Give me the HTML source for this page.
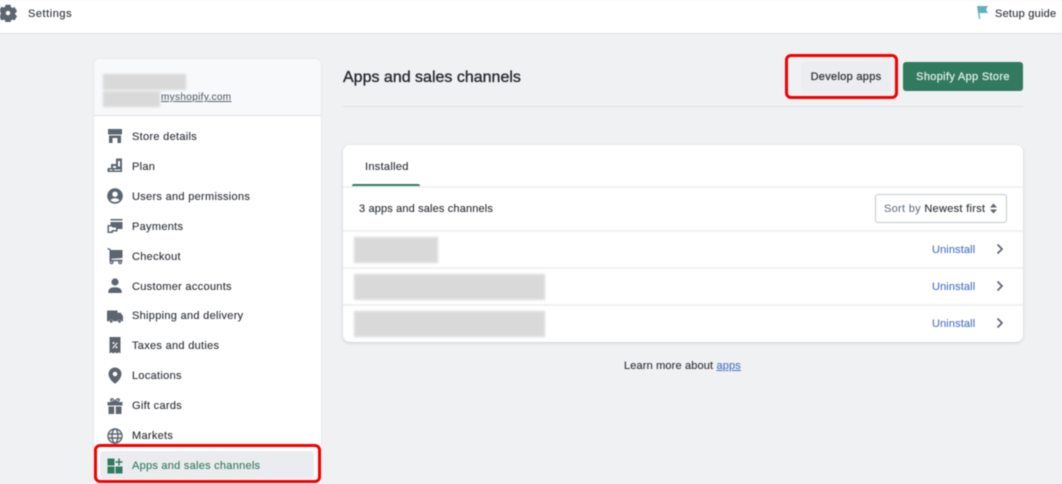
<!DOCTYPE html>
<html><head><meta charset="utf-8"><style>
html,body{margin:0;padding:0}
body{width:1062px;height:484px;overflow:hidden;background:#f0f1f3;font-family:"Liberation Sans",sans-serif;color:#2c3036;font-size:11px;letter-spacing:.3px;-webkit-text-stroke:.12px currentColor}
#w{position:relative;width:1062px;height:484px;overflow:hidden;filter:blur(.4px)}
.a{position:absolute;white-space:nowrap}
.t{position:absolute;left:132px;white-space:nowrap;line-height:14px}
.i{position:absolute;left:106px;width:18px;height:18px}
.g{fill:#5c6570}
.bl{position:absolute;background:#d9d9d9;filter:blur(1px)}
.ln{position:absolute;background:#f0f1f2;height:2px}
.u{position:absolute;left:932px;color:#4d72c4;line-height:14px;letter-spacing:.12px}
.c{position:absolute;left:995px;width:10px;height:12px}
.m{letter-spacing:.15px}
</style></head><body><div id="w">
<div class="a" style="left:0;top:0;width:1062px;height:33px;background:#fff;border-bottom:1px solid #dfe1e4"></div>
<svg class="a" style="left:-1px;top:4px;width:18px;height:18px" viewBox="0 0 18 18"><path class="g" fill-rule="evenodd" d="M6.500 .8h5l.5 2.400 1.300.7 2.300-.8 2.500 4.200-1.800 1.700-.1.000.1 1.600 1.800 1.600-2.500 4.200-2.300-.8-1.300.7-.5 2.400h-5l-.5-2.400-1.300-.7-2.300.8L-.1 12.200l1.800-1.600V8.600L-.1 6.900 2.400 2.700l2.300.8 1.300-.7zM9 6.900a2.200 2.200 0 1 0 0 4.400 2.200 2.200 0 0 0 0-4.400z"/></svg>
<div class="a" style="left:28px;top:7px;line-height:14px;letter-spacing:.55px">Settings</div>
<svg class="a" style="left:976px;top:5px;width:13px;height:15px" viewBox="0 0 13 15"><path fill="#5fb0c0" d="M1 1h11l-2 3.500L12 8H3.500l.8 6H3z"/></svg>
<div class="a" style="left:995px;top:7px;line-height:14px;letter-spacing:.24px">Setup guide</div>

<div class="a" style="left:94px;top:59px;width:227px;height:440px;background:#fff;border-radius:6px;box-shadow:0 0 2px rgba(60,70,80,.12)"></div>
<div class="a" style="left:94px;top:59px;width:227px;height:56px;background:#f8f9fa;border-radius:6px 6px 0 0;border-bottom:1px solid #dfe1e4"></div>
<div class="a" style="left:161px;top:91px;font-size:10px;line-height:14px;color:#5c6570;text-decoration:underline;letter-spacing:.35px">myshopify.com</div>
<div class="bl" style="left:103px;top:74px;width:83px;height:16px"></div>
<div class="bl" style="left:103px;top:91px;width:57px;height:16px"></div>

<svg class="i" style="top:127px" viewBox="0 0 18 18"><path class="g" d="M2 2h14v5.500H2zM3 8.500h12V16h-3.500v-5h-5v5H3z"/></svg>
<div class="t" style="top:130px">Store details</div>
<svg class="i" style="top:157px" viewBox="0 0 18 18"><path class="g" fill-rule="evenodd" d="M10 1.500h6V15H1.500v-4H5V7h5zM7 9v2h3V9zM3.500 12.500v1h3v-1zM8 12.500v1h6.500v-1zM12 4v5.500h2V4z"/></svg>
<div class="t" style="top:160px">Plan</div>
<svg class="i" style="top:187px" viewBox="0 0 18 18"><path class="g" fill-rule="evenodd" d="M9 1.200a7.800 7.800 0 1 1 0 15.600A7.800 7.800 0 0 1 9 1.200zM9 4.500a2.700 2.700 0 1 0 0 5.400 2.700 2.700 0 0 0 0-5.400zM4.500 13.300c1 1 2.800 1.700 4.500 1.700s3.500-.7 4.500-1.700c-.8-1.400-2.600-2.100-4.500-2.100s-3.700.7-4.500 2.100z"/></svg>
<div class="t" style="top:190px">Users and permissions</div>
<svg class="i" style="top:217px" viewBox="0 0 18 18"><path class="g" fill-rule="evenodd" d="M4.500 2h12v1.500h-12zM4.500 5h12v7h-5v2.500H7V16H1.500V8h3zM3 9.500v5h2.500V13H10v-2.500H6V9.500z"/></svg>
<div class="t" style="top:220px">Payments</div>
<svg class="i" style="top:247px" viewBox="0 0 18 18"><path class="g" d="M1.500 1l2.800.8.600 1.200h11.600v8l-11 .8v1h11v1.400H3.500V3L1.500 2.300z"/><path fill="none" stroke="#5c6570" stroke-width="1.300" d="M4.300 15.300a1.300 1.300 0 1 0 2.600 0 1.300 1.300 0 1 0-2.600 0zM12.800 15.300a1.300 1.300 0 1 0 2.600 0 1.300 1.300 0 1 0-2.600 0z"/></svg>
<div class="t" style="top:250px">Checkout</div>
<svg class="i" style="top:277px" viewBox="0 0 18 18"><circle class="g" cx="9" cy="5" r="3.600"/><path class="g" d="M2.300 16v-1.500c0-2.600 2.800-4.300 6.700-4.300s6.700 1.700 6.700 4.300V16z"/></svg>
<div class="t" style="top:280px">Customer accounts</div>
<svg class="i" style="top:307px" viewBox="0 0 18 18"><path class="g" d="M1 4.500a1 1 0 0 1 1-1h9.500v2.200h3.200L17 9.300v4.900h-1.400a2.200 2.200 0 0 0-4.200 0H7.300a2.200 2.200 0 0 0-4.200 0H1z"/><circle class="g" cx="5.200" cy="14.300" r="1.500"/><circle class="g" cx="13.500" cy="14.300" r="1.500"/></svg>
<div class="t" style="top:309px">Shipping and delivery</div>
<svg class="i" style="top:337px" viewBox="0 0 18 18"><path class="g" fill-rule="evenodd" d="M3.500 0h11v16.500l-1.800-1.200-1.900 1.200-1.800-1.200-1.800 1.200-1.900-1.200-1.800 1.200zM6.500 6a1 1 0 1 0 2 0 1 1 0 0 0-2 0zM9.500 10.300a1 1 0 1 0 2 0 1 1 0 0 0-2 0zM6.300 10.800l.8.700 4.600-5.400-.8-.7z"/></svg>
<div class="t" style="top:339px">Taxes and duties</div>
<svg class="i" style="top:366.500px" viewBox="0 0 18 18"><path class="g" fill-rule="evenodd" d="M9 .5a6.500 6.500 0 0 1 6.500 6.500c0 3.800-3.600 7.800-6.500 9.700-2.900-1.900-6.500-5.900-6.500-9.700A6.500 6.500 0 0 1 9 .5zM9 4.700a2.300 2.300 0 1 0 0 4.600 2.300 2.300 0 0 0 0-4.600z"/></svg>
<div class="t" style="top:369px">Locations</div>
<svg class="i" style="top:396.500px" viewBox="0 0 18 18"><path class="g" fill-rule="evenodd" d="M1.500 5h15v3.500h-15zM2.500 9.500h5.700V17H2.500zM9.800 9.500h5.700V17H9.800z"/><path d="M9 5C8 2.500 6.500 1.500 5.300 2S4.300 4.500 9 5c4.700-.5 4.900-2.500 3.700-3S10 2.500 9 5z" fill="none" stroke="#5c6570" stroke-width="1.400"/></svg>
<div class="t" style="top:399px">Gift cards</div>
<svg class="i" style="top:426.500px" viewBox="0 0 18 18" fill="none" stroke="#5c6570" stroke-width="1.400"><circle cx="9" cy="9" r="7"/><ellipse cx="9" cy="9" rx="3" ry="7"/><path d="M2 7h14M2 11h14"/></svg>
<div class="t" style="top:429px">Markets</div>

<div class="a" style="left:100px;top:451px;width:214px;height:28px;background:#ebecef;border-radius:4px"></div>
<svg class="i" style="top:456.500px" viewBox="0 0 18 18"><path fill="#317a5f" d="M1.500 1.500h7v7h-7zM1.500 9.500h7v7h-7zM9.500 9.500h7v7h-7zM12.300 1.500h1.500v2.700h2.700v1.500h-2.700v2.800h-1.500V5.700H9.500V4.200h2.800z"/></svg>
<div class="t" style="top:459px;color:#317a5f;letter-spacing:.26px">Apps and sales channels</div>
<div class="a" style="left:94px;top:444px;width:227px;height:39px;box-sizing:border-box;border:3px solid #f40000;border-radius:6px"></div>

<div class="a" style="left:343px;top:68px;font-size:16px;font-weight:400;line-height:20px;letter-spacing:0;color:#24282d;-webkit-text-stroke:.35px #24282d">Apps and sales channels</div>
<div class="a" style="left:343px;top:106px;width:680px;height:1px;background:#dfe1e4"></div>
<div class="a" style="left:801px;top:62px;width:90px;height:29px;background:#ecedf0;border-radius:3px;text-align:center;line-height:30px;color:#2c3036;-webkit-text-stroke:.25px #2c3036">Develop apps</div>
<div class="a" style="left:785px;top:54px;width:113px;height:45px;box-sizing:border-box;border:3px solid #f40000;border-radius:6px"></div>
<div class="a" style="left:903px;top:62px;width:120px;height:29px;background:#317a5f;border-radius:3px;text-align:center;line-height:30px;color:#e8f2ee;-webkit-text-stroke:.2px #e8f2ee;letter-spacing:.33px">Shopify App Store</div>

<div class="a" style="left:343px;top:145px;width:680px;height:197px;background:#fff;border-radius:7px;box-shadow:0 1px 3px rgba(60,70,80,.2)"></div>
<div class="a" style="left:365px;top:160px;line-height:14px">Installed</div>
<div class="a" style="left:352px;top:184px;width:68px;height:3px;background:#317a5f;border-radius:2px 2px 0 0"></div>
<div class="ln" style="left:343px;top:186px;width:680px"></div>
<div class="a m" style="left:359px;top:202px;line-height:14px">3 apps and sales channels</div>
<div class="a" style="left:875px;top:194px;width:132px;height:29px;box-sizing:border-box;background:#fff;border:1px solid #c4c8cd;border-radius:3px;padding-left:8px;line-height:28px;color:#6d7580">Sort by <span style="color:#2c3036">Newest first</span></div>
<svg class="a" style="left:989px;top:203px;width:9px;height:11px" viewBox="0 0 9 11"><path class="g" d="M4.500 .5L8 4.500H1zM4.500 10.500L1 6.500h7z"/></svg>
<div class="ln" style="left:343px;top:230px;width:680px"></div>
<div class="ln" style="left:343px;top:267px;width:680px"></div>
<div class="ln" style="left:343px;top:304px;width:680px"></div>
<div class="bl" style="left:354px;top:237px;width:84px;height:26px"></div>
<div class="bl" style="left:354px;top:274px;width:191px;height:26px"></div>
<div class="bl" style="left:354px;top:311px;width:191px;height:26px"></div>
<div class="u" style="top:243px">Uninstall</div>
<div class="u" style="top:280px">Uninstall</div>
<div class="u" style="top:317px">Uninstall</div>
<svg class="c" style="top:243px" viewBox="0 0 10 12"><path d="M2.500 1.500L7 6l-4.500 4.500" fill="none" stroke="#5c6570" stroke-width="1.700"/></svg>
<svg class="c" style="top:280px" viewBox="0 0 10 12"><path d="M2.500 1.500L7 6l-4.500 4.500" fill="none" stroke="#5c6570" stroke-width="1.700"/></svg>
<svg class="c" style="top:317px" viewBox="0 0 10 12"><path d="M2.500 1.500L7 6l-4.500 4.500" fill="none" stroke="#5c6570" stroke-width="1.700"/></svg>
<div class="a m" style="left:624px;top:359px;line-height:14px">Learn more about <span style="color:#4d72c4;text-decoration:underline">apps</span></div>
</div></body></html>
